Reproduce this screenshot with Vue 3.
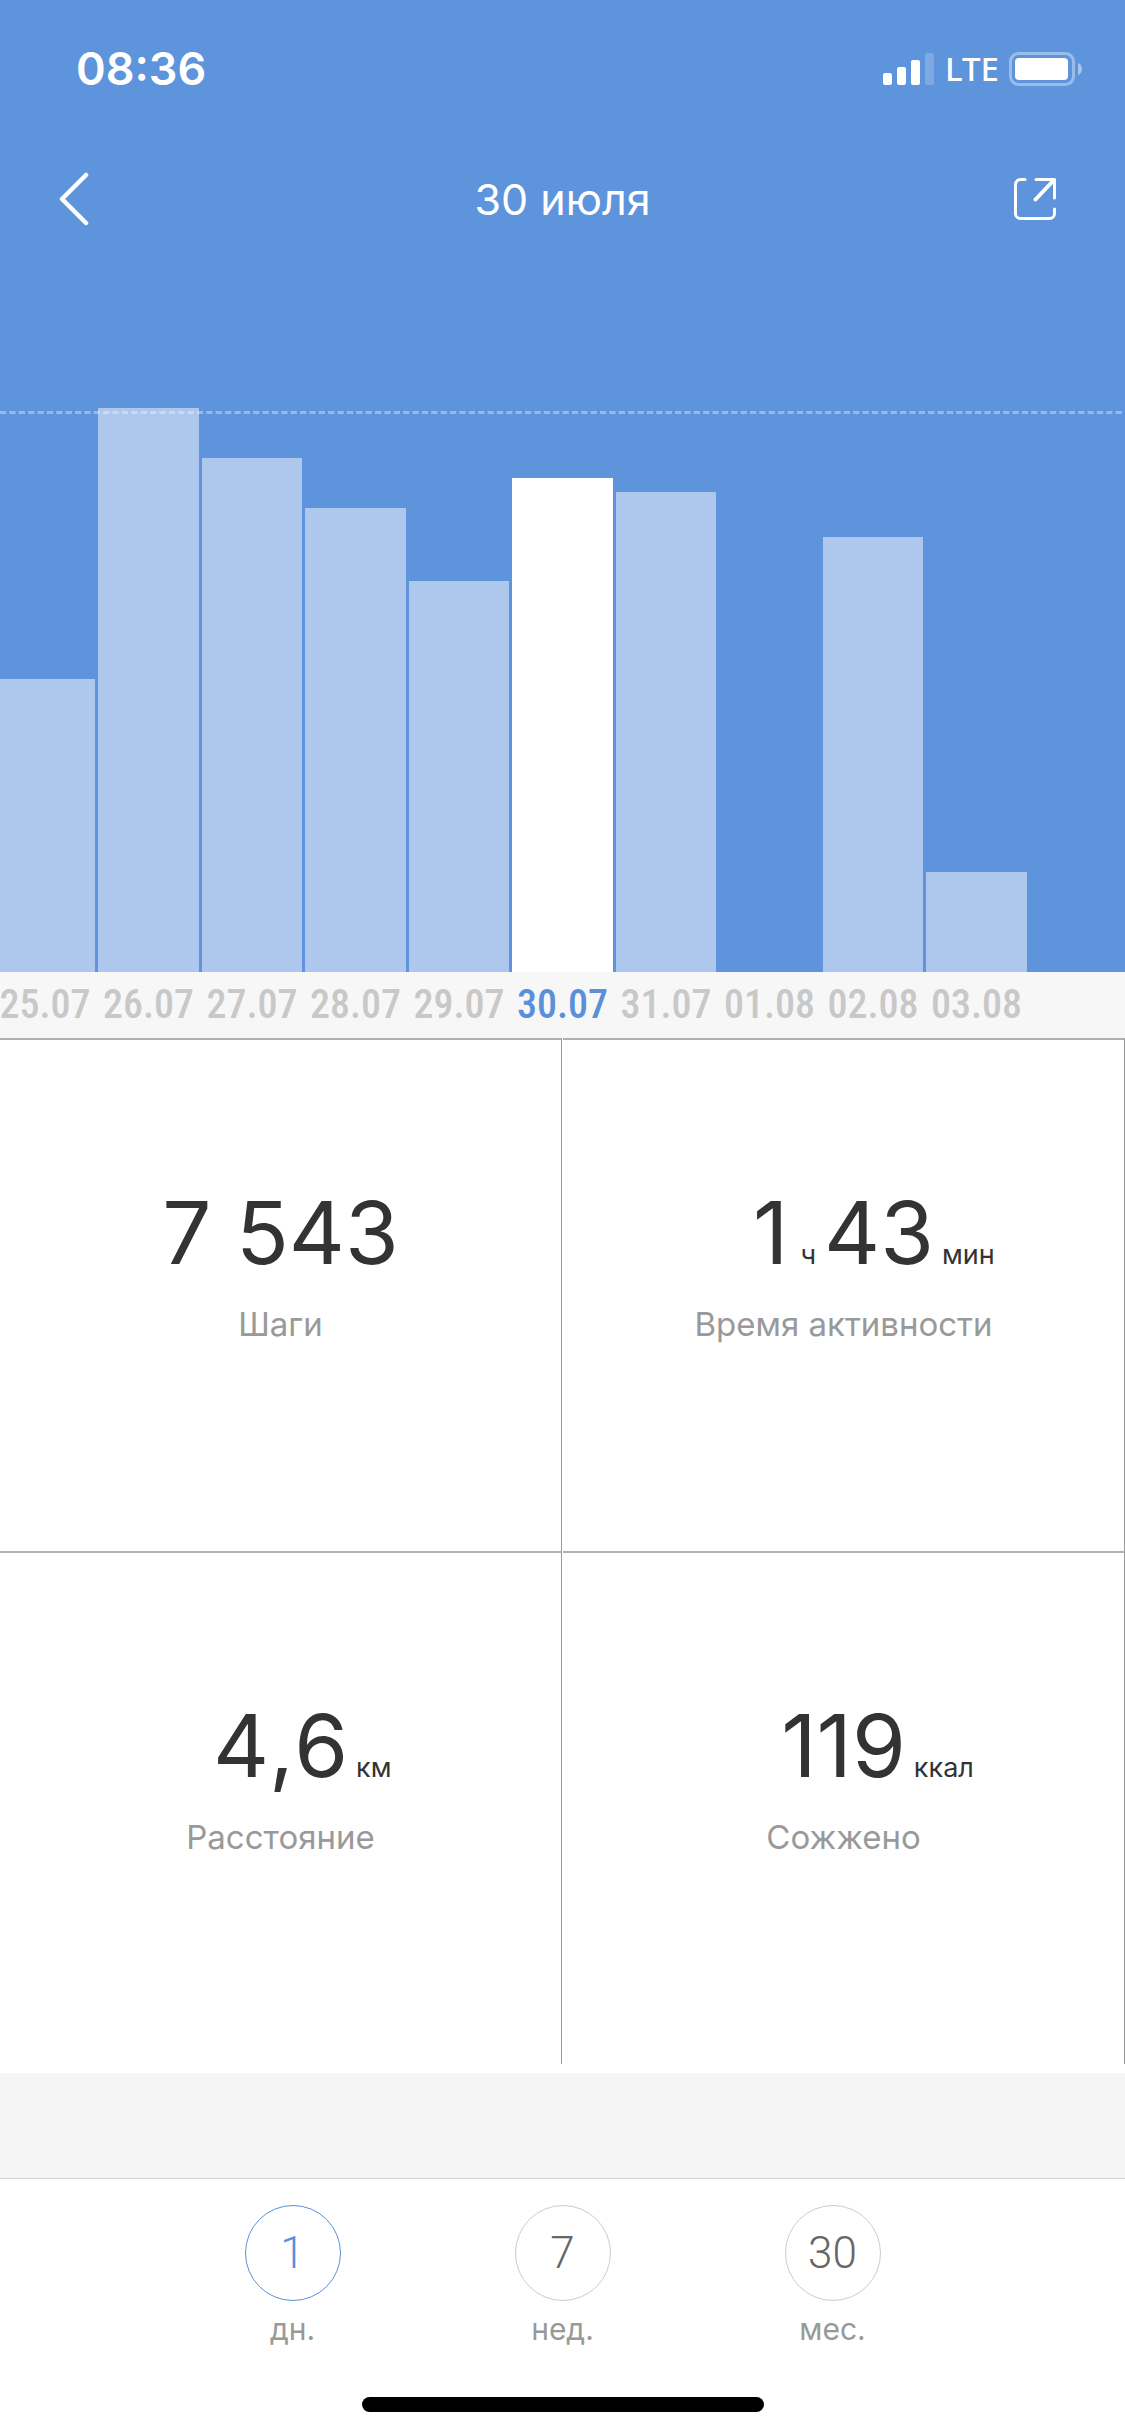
<script setup>
import { ref } from 'vue'

const PLOT_MAX = 10811

const days = [
  { date: '25.07', steps: 4474 },
  { date: '26.07', steps: 8612 },
  { date: '27.07', steps: 7848 },
  { date: '28.07', steps: 7085 },
  { date: '29.07', steps: 5970 },
  { date: '30.07', steps: 7543 },
  { date: '31.07', steps: 7329 },
  { date: '01.08', steps: 0 },
  { date: '02.08', steps: 6642 },
  { date: '03.08', steps: 1527 },
  { date: '', steps: 0 }
]

const stats = [
  { parts: [{ text: '7 543' }], unit: '', label: 'Шаги' },
  { parts: [{ text: '1' }, { text: 'ч', small: true }, { text: '43' }], unit: 'мин', label: 'Время активности' },
  { parts: [{ text: '4,6' }], unit: 'км', label: 'Расстояние' },
  { parts: [{ text: '119' }], unit: 'ккал', label: 'Сожжено' }
]

const periods = [
  { count: '1', label: 'дн.' },
  { count: '7', label: 'нед.' },
  { count: '30', label: 'мес.' }
]

const selectedDate = ref('30.07')
const selectedPeriod = ref('1')

const barHeight = (steps) => `${(steps / PLOT_MAX) * 100}%`
</script>

<template>
  <div class="screen">
    <header class="top">
      <div class="status">
        <time class="clock">08:36</time>
        <div class="indicators">
          <svg class="signal" width="52" height="34" viewBox="0 0 52 34" fill="#fff" aria-hidden="true">
            <rect x="0" y="21" width="9" height="12" rx="2" />
            <rect x="14" y="15" width="9" height="18" rx="2" />
            <rect x="28" y="8" width="9" height="25" rx="2" />
            <rect x="42" y="1" width="9" height="32" rx="2" opacity="0.2" />
          </svg>
          <span class="network">LTE</span>
          <svg class="battery" width="74" height="34" viewBox="0 0 74 34" aria-hidden="true">
            <rect x="1.5" y="1.5" width="63" height="31" rx="8" fill="none" stroke="#fff" stroke-width="3" opacity="0.38" />
            <rect x="6" y="6" width="53" height="22" rx="4" fill="#fff" />
            <path d="M69 11c3 1 4 3.500 4 6s-1 5-4 6z" fill="#fff" opacity="0.45" />
          </svg>
        </div>
      </div>
      <nav class="nav">
        <button class="icon-button" type="button" aria-label="Назад">
          <svg width="32" height="54" viewBox="0 0 32 54" fill="none" stroke="#fff" stroke-width="4.500" stroke-linecap="round" stroke-linejoin="round">
            <path d="M28 3 4 27l24 24" />
          </svg>
        </button>
        <h1 class="title">30 июля</h1>
        <button class="icon-button share" type="button" aria-label="Поделиться">
          <svg width="44" height="44" viewBox="0 0 44 44" fill="none" stroke="#fff" stroke-width="3" stroke-linecap="round" stroke-linejoin="round">
            <path d="M12 2.500H7.500a5 5 0 0 0-5 5v29a5 5 0 0 0 5 5h29a5 5 0 0 0 5-5V32" />
            <path d="M23 2.500h18.500V21" />
            <path d="M40 4 22.500 22.500" stroke-width="4" />
          </svg>
        </button>
      </nav>
    </header>

    <section class="chart" aria-label="Шаги по дням">
      <div class="plot columns">
        <div v-for="(day, i) in days" :key="i" class="column">
          <div
            class="bar"
            :class="{ active: day.date === selectedDate }"
            :style="{ height: barHeight(day.steps) }"
          ></div>
        </div>
        <svg class="goal" width="100%" height="3" aria-hidden="true">
          <line x1="0" y1="1.500" x2="100%" y2="1.500" pathLength="360" />
        </svg>
      </div>
      <div class="axis columns">
        <button
          v-for="(day, i) in days"
          :key="i"
          class="date"
          :class="{ active: day.date === selectedDate }"
          type="button"
          :disabled="!day.date"
          @click="selectedDate = day.date"
        >{{ day.date }}</button>
      </div>
    </section>

    <main class="stats">
      <article v-for="stat in stats" :key="stat.label" class="stat">
        <p class="value">
          <span v-for="(part, i) in stat.parts" :key="i" :class="{ mid: part.small }">{{ part.text }}</span>
          <span v-if="stat.unit" class="unit">{{ stat.unit }}</span>
        </p>
        <p class="label">{{ stat.label }}</p>
      </article>
    </main>

    <div class="spacer"></div>

    <footer class="periods">
      <div class="period-list">
        <button
          v-for="period in periods"
          :key="period.count"
          class="period"
          :class="{ active: period.count === selectedPeriod }"
          type="button"
          @click="selectedPeriod = period.count"
        >
          <span class="circle">{{ period.count }}</span>
          <span class="period-label">{{ period.label }}</span>
        </button>
      </div>
      <div class="home-indicator"></div>
    </footer>
  </div>
</template>

<style>
body {
  margin: 0;
  background: #fff;
}
</style>

<style scoped>
.screen {
  display: flex;
  flex-direction: column;
  min-height: 100vh;
  overflow: hidden;
  background: #fff;
  color: #333;
  font-family: Inter, "Liberation Sans", sans-serif;
}

button {
  margin: 0;
  padding: 0;
  border: 0;
  background: none;
  color: inherit;
  font: inherit;
}

.top {
  background: #5e94dc;
  color: #fff;
}

.status {
  display: flex;
  align-items: center;
  justify-content: space-between;
  height: 138px;
  padding: 0 42px 0 76px;
}

.clock {
  font-size: 45px;
  line-height: 56px;
  font-weight: 600;
}

.indicators {
  display: flex;
  align-items: center;
  gap: 10px;
}

.network {
  font-family: "Noto Sans", sans-serif;
  font-size: 33px;
  line-height: 34px;
  font-weight: 500;
}

.nav {
  display: flex;
  align-items: center;
  justify-content: space-between;
  height: 122px;
  padding: 0 58px;
}

.icon-button {
  display: flex;
  box-sizing: border-box;
  width: 64px;
}

.share {
  justify-content: flex-end;
  padding-right: 10px;
}

.title {
  margin: 0;
  font-size: 43px;
  line-height: 56px;
  font-weight: 400;
}

.columns {
  display: grid;
  grid-template-columns: repeat(11, calc(9.2% - 3px));
  column-gap: 3px;
  justify-content: center;
}

.plot {
  position: relative;
  height: 712px;
  background: #5e94dc;
}

.column {
  display: flex;
  align-items: flex-end;
  height: 708px;
  margin-top: 4px;
}

.bar {
  flex: 1;
  background: #adc8ec;
}

.bar.active {
  background: #fff;
}

.goal {
  position: absolute;
  left: 0;
  bottom: 558px;
}

.goal line {
  stroke: #fff;
  stroke-opacity: 0.35;
  stroke-width: 3;
  stroke-dasharray: 2 1;
}

.axis {
  height: 66px;
  background: #f7f7f7;
}

.date {
  color: #c8c8c8;
  font-family: "Roboto Condensed", Roboto, sans-serif;
  font-size: 40px;
  line-height: 66px;
  font-weight: 500;
}

.date.active {
  color: #5890da;
}

.stats {
  display: grid;
  grid-template-columns: 1fr 1fr;
  column-gap: 1px;
  padding-bottom: 9px;
}

.stat {
  box-sizing: border-box;
  min-height: 513px;
  padding-top: 149px;
  border-top: 2px solid #b0b0b0;
  border-right: 1px solid #999;
  text-align: center;
}

.value {
  display: flex;
  align-items: baseline;
  justify-content: center;
  margin: 0 0 27px;
  font-size: 87px;
  line-height: 88px;
  font-kerning: none;
}

.mid {
  margin: 0 8px 0 12px;
  font-size: 27px;
  line-height: 27px;
}

.unit {
  width: 0;
  padding-left: 8px;
  margin-right: -8px;
  font-size: 27px;
  line-height: 27px;
  white-space: nowrap;
}

.label {
  margin: 0;
  color: #999;
  font-size: 33px;
  line-height: 40px;
}

.spacer {
  flex: 1;
  min-height: 105px;
  background: #f5f5f5;
}

.periods {
  display: flex;
  flex-direction: column;
  align-items: center;
  padding: 26px 0 24px;
  border-top: 1px solid #d0d0d0;
}

.period-list {
  display: grid;
  grid-template-columns: repeat(3, 24%);
  justify-content: center;
  width: 100%;
  margin-bottom: 48px;
}

.period {
  display: flex;
  flex-direction: column;
  align-items: center;
  gap: 8px;
}

.circle {
  box-sizing: border-box;
  width: 96px;
  height: 96px;
  border: 1px solid #ccc;
  border-radius: 50%;
  color: #666;
  font-family: Roboto, sans-serif;
  font-size: 44px;
  line-height: 94px;
  font-weight: 300;
}

.period.active .circle {
  border-color: #5890da;
  color: #5890da;
}

.period-label {
  color: #999;
  font-size: 30px;
  line-height: 40px;
}

.home-indicator {
  width: 402px;
  height: 15px;
  border-radius: 8px;
  background: #000;
}
</style>
